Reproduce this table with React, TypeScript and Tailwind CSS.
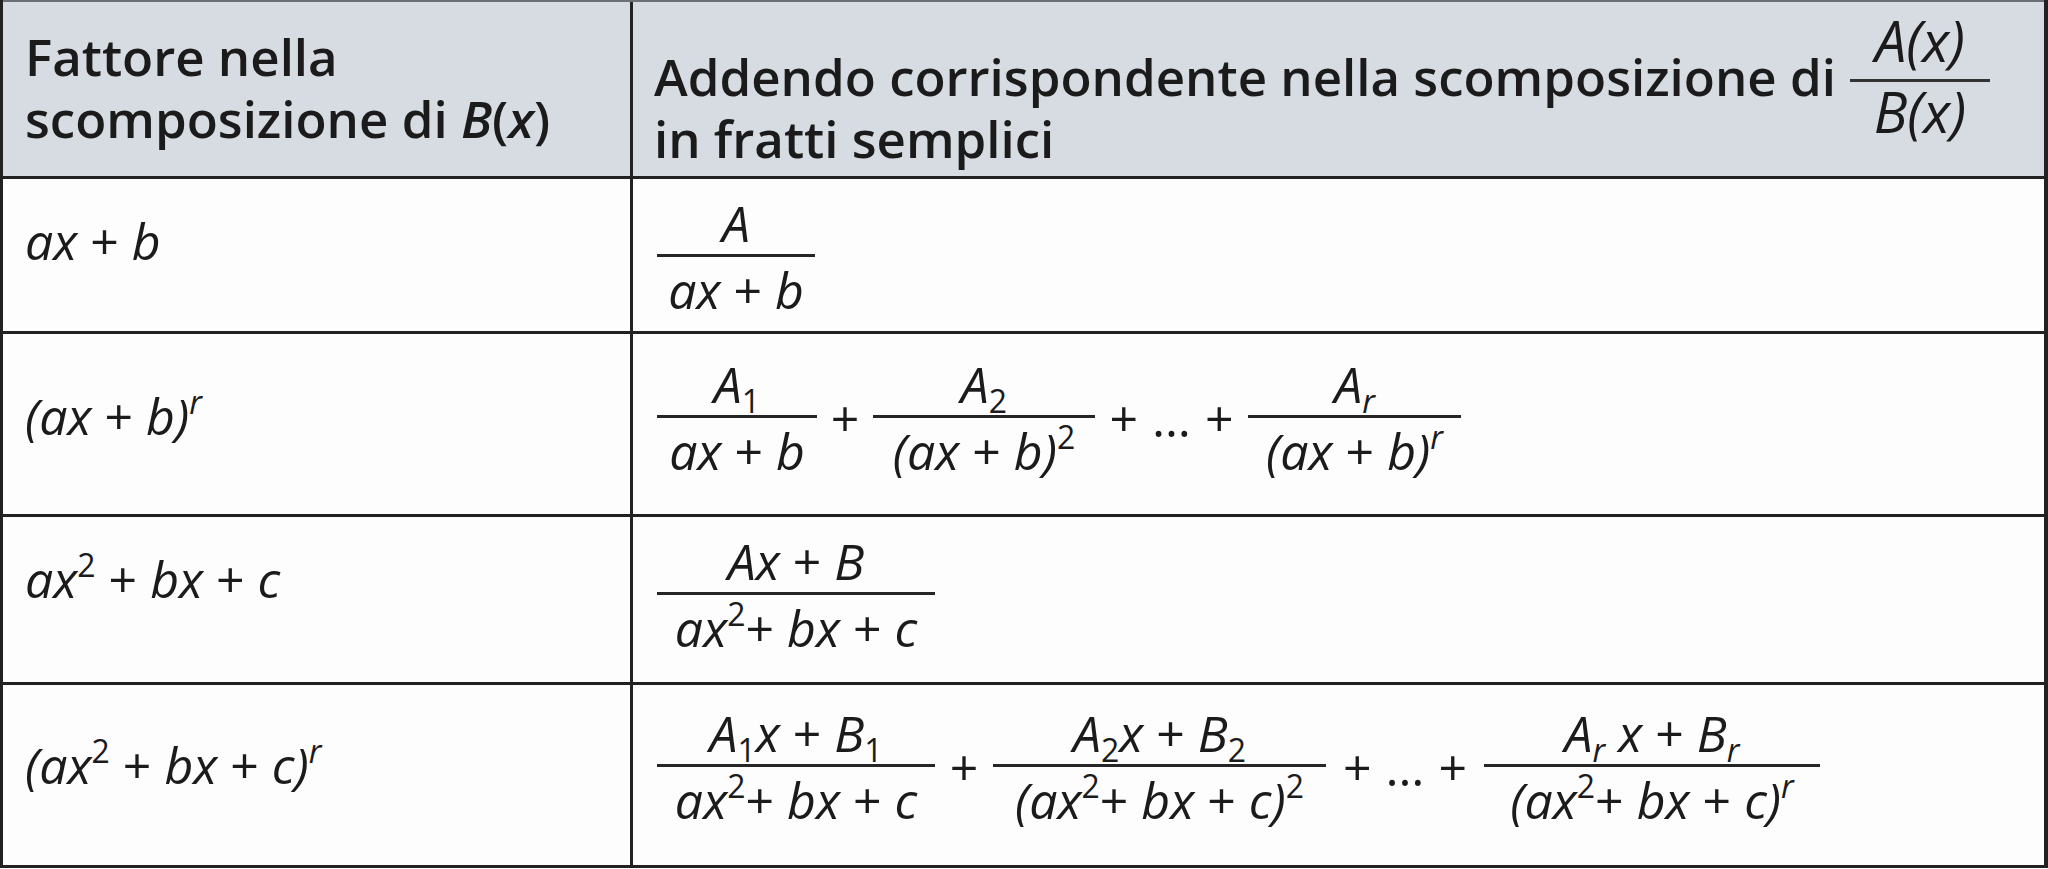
import React from "react";

type Node = React.ReactNode;

// raised / lowered small figures inside a formula
function Sup({ children, it = false }: { children: Node; it?: boolean }) {
  return (
    <span className={`text-[32px] leading-[0] align-[21px] ${it ? "italic" : "not-italic"}`}>{children}</span>
  );
}

function Sub({ children, it = false }: { children: Node; it?: boolean }) {
  return (
    <span className={`text-[32px] leading-[0] align-[-10px] ${it ? "italic" : "not-italic"}`}>{children}</span>
  );
}

function Plus() {
  return <span className="not-italic">+</span>;
}

function Frac({ num, den, w }: { num: Node; den: Node; w: string }) {
  return (
    <div className={`flex shrink-0 flex-col items-center ${w}`}>
      <div className="whitespace-nowrap pb-[6px] leading-[50px]">{num}</div>
      <div className="h-[3px] w-full bg-[#262626]" />
      <div className="whitespace-nowrap pt-[8px] leading-[50px]">{den}</div>
    </div>
  );
}

function Op({ w }: { w: string }) {
  return <span className={`shrink-0 text-center leading-[50px] not-italic ${w}`}>+</span>;
}

function Dots({ w }: { w: string }) {
  return (
    <span className={`flex shrink-0 justify-center gap-[14px] leading-[50px] not-italic ${w}`}>
      <span>+</span>
      <span>…</span>
      <span>+</span>
    </span>
  );
}

const axb = (
  <>
    ax <Plus /> b
  </>
);

const quad = (
  <>
    ax<Sup>2</Sup>
    <Plus /> bx <Plus /> c
  </>
);

function Row({ h, leftPt, rightPt, left, children }: { h: string; leftPt: string; rightPt: string; left: Node; children: Node }) {
  return (
    <div className={`flex border-b-[3px] border-[#222] bg-[#fdfdfd] ${h}`}>
      <div className={`w-[630px] shrink-0 border-r-[3px] border-[#222] pl-[22px] ${leftPt}`}>
        <div className="whitespace-nowrap text-[50px] italic leading-[62px]">{left}</div>
      </div>
      <div className={`flex-1 pl-[24px] ${rightPt}`}>
        <div className="flex items-center text-[50px] italic">{children}</div>
      </div>
    </div>
  );
}

export default function App() {
  return (
    <div className="h-[869px] w-[2048px] bg-white font-['Open_Sans',sans-serif] text-[#1b1b1b]">
      <div className="w-[2048px] border-l-[3px] border-r-[4px] border-[#222]">
        {/* header */}
        <div className="flex h-[179px] border-t-2 border-b-[3px] border-t-[#6b7075] border-b-[#222] bg-[#d7dce2]">
          <div className="w-[630px] shrink-0 border-r-[3px] border-[#222] pl-[22px] pt-[23px]">
            <div className="text-[51px] font-semibold leading-[62px]">
              <div>Fattore nella</div>
              <div>
                scomposizione di <span className="italic">B</span>(<span className="italic">x</span>)
              </div>
            </div>
          </div>
          <div className="flex flex-1 items-start pl-[21px] pt-[13px]">
            <div className="mt-[30px] whitespace-nowrap text-[51px] font-semibold leading-[62px]">
              <div>Addendo corrispondente nella scomposizione di</div>
              <div>in fratti semplici</div>
            </div>
            <div className="ml-[14px] flex w-[140px] flex-col items-center text-[56px] font-medium italic">
              <div className="pb-[14px] leading-[50px]">A(x)</div>
              <div className="h-[3px] w-full bg-[#333]" />
              <div className="pt-[4px] leading-[50px]">B(x)</div>
            </div>
          </div>
        </div>

        <Row h="h-[155px]" leftPt="pt-[31px]" rightPt="pt-[19px]" left={axb}>
          <Frac w="w-[158px]" num="A" den={axb} />
        </Row>

        <Row
          h="h-[183px]"
          leftPt="pt-[51px]"
          rightPt="pt-[25px]"
          left={
            <>
              (ax <Plus /> b)<Sup it>r</Sup>
            </>
          }
        >
          <Frac
            w="w-[160px]"
            num={
              <>
                A<Sub>1</Sub>
              </>
            }
            den={axb}
          />
          <Op w="w-[56px]" />
          <Frac
            w="w-[222px]"
            num={
              <>
                A<Sub>2</Sub>
              </>
            }
            den={
              <>
                (ax <Plus /> b)<Sup>2</Sup>
              </>
            }
          />
          <Dots w="w-[153px]" />
          <Frac
            w="w-[213px]"
            num={
              <>
                A<Sub it>r</Sub>
              </>
            }
            den={
              <>
                (ax <Plus /> b)<Sup it>r</Sup>
              </>
            }
          />
        </Row>

        <Row
          h="h-[168px]"
          leftPt="pt-[31px]"
          rightPt="pt-[19px]"
          left={
            <>
              ax<Sup>2</Sup> <Plus /> bx <Plus /> c
            </>
          }
        >
          <Frac
            w="w-[278px]"
            num={
              <>
                Ax <Plus /> B
              </>
            }
            den={quad}
          />
        </Row>

        <Row
          h="h-[183px]"
          leftPt="pt-[49px]"
          rightPt="pt-[23px]"
          left={
            <>
              (ax<Sup>2</Sup> <Plus /> bx <Plus /> c)<Sup it>r</Sup>
            </>
          }
        >
          <Frac
            w="w-[278px]"
            num={
              <>
                A<Sub>1</Sub>x <Plus /> B<Sub>1</Sub>
              </>
            }
            den={quad}
          />
          <Op w="w-[58px]" />
          <Frac
            w="w-[333px]"
            num={
              <>
                A<Sub>2</Sub>x <Plus /> B<Sub>2</Sub>
              </>
            }
            den={
              <>
                ({quad})<Sup>2</Sup>
              </>
            }
          />
          <Dots w="w-[158px]" />
          <Frac
            w="w-[336px]"
            num={
              <>
                A<Sub it>r</Sub> x <Plus /> B<Sub it>r</Sub>
              </>
            }
            den={
              <>
                ({quad})<Sup it>r</Sup>
              </>
            }
          />
        </Row>
      </div>
    </div>
  );
}
